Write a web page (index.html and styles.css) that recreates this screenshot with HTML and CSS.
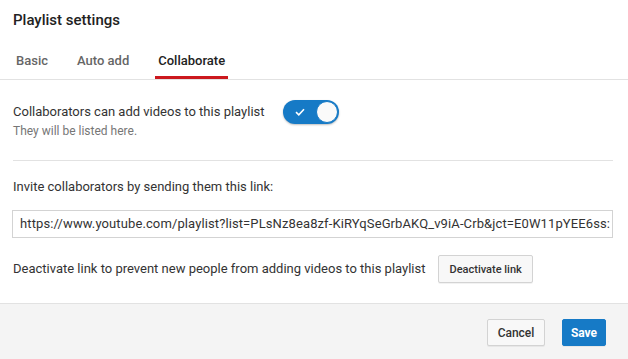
FILE: index.html
```html
<!DOCTYPE html>
<html>
<head>
<meta charset="utf-8">
<link rel="stylesheet" href="styles.css">
</head>
<body>
<div class="dialog">
  <div class="header"><h1 class="title">Playlist settings</h1></div>
  <div class="tabs">
    <div class="tab">Basic</div>
    <div class="tab">Auto add</div>
    <div class="tab active">Collaborate</div>
  </div>
  <div class="content">
    <div class="toggle-row">
      <div class="toggle-text">
        <div class="main-text">Collaborators can add videos to this playlist</div>
        <div class="sub-text">They will be listed here.</div>
      </div>
      <div class="toggle">
        <svg class="check" width="10" height="8" viewBox="0 0 10 8"><path d="M1 4.2 L3.8 6.8 L9 1.2" fill="none" stroke="#fff" stroke-width="1.6"/></svg>
        <div class="knob"></div>
      </div>
    </div>
    <div class="divider"></div>
    <div class="invite">Invite collaborators by sending them this link:</div>
    <div class="link-box">https://www.youtube.com/playlist?list=PLsNz8ea8zf-KiRYqSeGrbAKQ_v9iA-Crb&amp;jct=E0W11pYEE6ss:</div>
    <div class="deactivate-row">
      <span class="main-text">Deactivate link to prevent new people from adding videos to this playlist</span>
      <button class="btn">Deactivate link</button>
    </div>
  </div>
  <div class="footer">
    <button class="btn btn-footer btn-cancel">Cancel</button>
    <button class="btn btn-footer btn-primary">Save</button>
  </div>
</div>
</body>
</html>
```
FILE: styles.css
```css
html, body {
  margin: 0;
  padding: 0;
  background: #fff;
}
body {
  font-family: Roboto, "Liberation Sans", Arial, sans-serif;
  color: #333;
  width: 628px;
  height: 359px;
  overflow: hidden;
}
.dialog {
  display: flex;
  flex-direction: column;
  height: 359px;
}
.header {
  padding: 10px 13px 0;
  height: 35px;
  box-sizing: border-box;
}
.title {
  margin: 0;
  font-size: 15px;
  font-weight: 500;
  line-height: 20px;
  color: #222;
}
.tabs {
  display: flex;
  padding-left: 13px;
  border-bottom: 1px solid #e2e2e2;
  margin-top: 9px;
}
.tab {
  font-size: 13px;
  font-weight: 500;
  color: #666;
  line-height: 18px;
  padding: 8px 3px 6px;
  border-bottom: 3px solid transparent;
  margin-right: 23px;
}
.tab.active {
  color: #222;
  border-bottom-color: #cc181e;
}
.content {
  padding: 0 15px 0 13px;
  flex: 1;
}
.toggle-row {
  display: flex;
  align-items: flex-start;
  gap: 18px;
  padding: 23px 0 21px;
}
.main-text {
  font-size: 13px;
  line-height: 18px;
  color: #333;
}
.sub-text {
  font-size: 12px;
  line-height: 16px;
  color: #767676;
  margin-top: 2px;
}
.toggle {
  margin-top: -3px;
  width: 56px;
  height: 24px;
  border-radius: 12px;
  background: #167ac6;
  display: flex;
  align-items: center;
  justify-content: space-between;
  box-sizing: border-box;
  padding-left: 12px;
  box-shadow: 0 1px 2px rgba(0,0,0,0.25);
}
.check {
  display: block;
}
.knob {
  width: 22px;
  height: 22px;
  border-radius: 50%;
  background: #fafafa;
  border: 1px solid #167ac6;
  box-sizing: border-box;
  margin-right: 1px;
}
.divider {
  height: 1px;
  background: #e2e2e2;
}
.invite {
  font-size: 13px;
  line-height: 18px;
  margin-top: 17px;
  color: #333;
}
.link-box {
  margin-top: 14px;
  margin-left: -1px;
  height: 28px;
  box-sizing: border-box;
  border: 1px solid #d3d3d3;
  font-size: 13px;
  letter-spacing: 0.11px;
  line-height: 26px;
  padding-left: 7px;
  white-space: nowrap;
  overflow: hidden;
  color: #333;
}
.deactivate-row {
  display: flex;
  align-items: center;
  gap: 13px;
  margin-top: 17px;
}
.btn {
  font-family: Roboto, "Liberation Sans", Arial, sans-serif;
  font-size: 11px;
  font-weight: 500;
  color: #333;
  background: #f8f8f8;
  border: 1px solid #d3d3d3;
  border-radius: 2px;
  height: 28px;
  padding: 0 10px;
  box-shadow: 0 1px 0 rgba(0,0,0,0.05);
}
.footer {
  height: 56px;
  box-sizing: border-box;
  background: #f4f4f4;
  border-top: 1px solid #e2e2e2;
  display: flex;
  justify-content: flex-end;
  align-items: flex-start;
  gap: 17px;
  padding: 15px 22px 0 0;
}
.btn-footer {
  height: 27px;
  font-size: 12px;
}
.btn-cancel {
  width: 58px;
  padding: 0;
}
.btn-primary {
  width: 44px;
  padding: 0;
  background: #167ac6;
  border-color: #167ac6;
  color: #fff;
  font-weight: 700;
}
```
